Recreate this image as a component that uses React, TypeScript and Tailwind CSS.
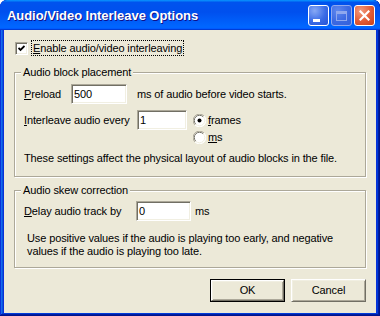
import React from "react";

const edit =
  "h-[20px] bg-white border border-t-[#ACA899] border-l-[#ACA899] border-b-white border-r-white shadow-[inset_1px_1px_0_#716F64,inset_-1px_-1px_0_#F1EFE2] pl-[2px] flex items-center";

function TitleButtons() {
  return (
    <div className="flex gap-[2px]">
      <div className="relative w-[21px] h-[21px] rounded-[3px] border border-white bg-[radial-gradient(circle_at_30%_25%,#88A9F5,#3A6BE6_55%,#2452D6)]">
        <div className="absolute left-[4px] top-[13px] w-[7px] h-[3px] bg-white" />
      </div>
      <div className="relative w-[21px] h-[21px] rounded-[3px] border border-[#8FA8EE] bg-[radial-gradient(circle_at_30%_25%,#5F88EE,#3C69E2_55%,#3460DA)]">
        <div className="absolute left-[4px] top-[5px] w-[11px] h-[10px] border border-t-[3px] border-[#8FA8EE]" />
      </div>
      <div className="relative w-[21px] h-[21px] rounded-[3px] border border-white bg-[radial-gradient(circle_at_30%_25%,#F39B7E,#E25B35_55%,#C8401A)]">
        <svg className="absolute left-[4px] top-[4px]" width="11" height="11" viewBox="0 0 11 11">
          <path d="M1.5 1.5 L9.5 9.5 M9.5 1.5 L1.5 9.5" stroke="white" strokeWidth="2.2" strokeLinecap="square" />
        </svg>
      </div>
    </div>
  );
}

function Radio({ checked }: { checked?: boolean }) {
  return (
    <svg width="13" height="13" viewBox="0 0 13 13" className="shrink-0">
      <circle cx="6.5" cy="6.5" r="6" fill="white" />
      <path d="M11 2 A6 6 0 0 0 2 11" stroke="#ACA899" strokeWidth="1" fill="none" />
      <path d="M10.2 2.8 A5 5 0 0 0 2.8 10.2" stroke="#716F64" strokeWidth="1" fill="none" />
      <path d="M2 11 A6 6 0 0 0 11 2" stroke="#FFFFFF" strokeWidth="1" fill="none" />
      <path d="M2.8 10.2 A5 5 0 0 0 10.2 2.8" stroke="#F1EFE2" strokeWidth="1" fill="none" />
      {checked && <circle cx="6.5" cy="6.5" r="2" fill="black" />}
    </svg>
  );
}

function Button({ label, def }: { label: string; def?: boolean }) {
  return (
    <div
      className={
        "w-[75px] h-[23px] flex items-center justify-center " +
        (def ? "border border-black " : "")
      }
    >
      <div className="w-full h-full flex items-center justify-center border border-t-white border-l-white border-b-[#716F64] border-r-[#716F64] shadow-[inset_1px_1px_0_#F1EFE2,inset_-1px_-1px_0_#ACA899]">
        {label}
      </div>
    </div>
  );
}

function Group({ title, children, className }: { title: string; children: React.ReactNode; className?: string }) {
  return (
    <div
      className={
        "flex flex-col border border-[#ACA899] shadow-[1px_1px_0_#fff,inset_1px_1px_0_#fff] pl-[9px] " +
        (className ?? "")
      }
    >
      <div className="self-start -mt-[7px] -ml-[3px] px-[2px] bg-[#ECE9D8] leading-[13px]">{title}</div>
      {children}
    </div>
  );
}

export default function App() {
  return (
    <div className="w-[380px] h-[316px] bg-white font-['Liberation_Sans',Arial,sans-serif] text-[11px] leading-[13px] text-black">
      <div className="w-full h-full flex flex-col rounded-t-[7px] bg-[#0831D9] shadow-[inset_-1px_-1px_#00138c,inset_1px_1px_#0831d9,inset_-2px_-2px_#001ea0,inset_2px_2px_#166aee,inset_-3px_-3px_#003bda,inset_3px_3px_#0855dd] overflow-hidden">
        <div className="h-[30px] shrink-0 flex items-center pl-[7px] pr-[5px] rounded-t-[7px] bg-[linear-gradient(180deg,#0997ff,#0053ee_8%,#0050ee_40%,#06f_88%,#06f_93%,#005bff_95%,#003dd7_96%,#003dd7)]">
          <div className="flex-1 text-white font-bold text-[13px] leading-[15px] tracking-[-0.05px] [text-shadow:1px_1px_0_#0f1089]">
            Audio/Video Interleave Options
          </div>
          <TitleButtons />
        </div>
        <div className="flex-1 mx-[4px] mb-[3px] bg-[#ECE9D8] flex flex-col px-[10px] tracking-[-0.12px]">
          {/* checkbox row */}
          <div className="mt-[10px] h-[16px] flex items-center">
            <div className="ml-[1px] w-[13px] h-[13px] bg-white border border-t-[#ACA899] border-l-[#ACA899] border-b-white border-r-white shadow-[inset_1px_1px_0_#716F64,inset_-1px_-1px_0_#F1EFE2] flex items-center justify-center">
              <svg width="7" height="7" viewBox="0 0 7 7">
                <path d="M0.5 3 L2.5 5 L6.5 1" stroke="black" strokeWidth="1.8" fill="none" />
              </svg>
            </div>
            <div className="ml-[3px] h-[16px] border border-dotted border-black px-[1px] flex items-center">
              <span>
                <u>E</u>nable audio/video interleaving
              </span>
            </div>
          </div>

          <Group title="Audio block placement" className="mt-[16px] pb-[11px]">
            <div className="mt-[5px] flex items-center">
              <div className="w-[47px]">
                <u>P</u>reload
              </div>
              <div className={edit + " w-[56px]"}>500</div>
              <div className="ml-[10px]">ms of audio before video starts.</div>
            </div>
            <div className="mt-[6px] flex items-start">
              <div className="w-[113px] h-[20px] flex items-center">
                <u>I</u>nterleave audio every
              </div>
              <div className={edit + " w-[50px]"}>1</div>
              <div className="ml-[6px] flex flex-col">
                <div className="h-[20px] flex items-center">
                  <Radio checked />
                  <span className="ml-[2px]">
                    <u>f</u>rames
                  </span>
                </div>
                <div className="mt-[1px] h-[13px] flex items-center">
                  <Radio />
                  <span className="ml-[2px]">
                    <u>m</u>s
                  </span>
                </div>
              </div>
            </div>
            <div className="mt-[8px]">
              These settings affect the physical layout of audio blocks in the file.
            </div>
          </Group>

          <Group title="Audio skew correction" className="mt-[13px] pb-[9px]">
            <div className="mt-[4px] flex items-center">
              <div className="w-[112px]">
                <u>D</u>elay audio track by
              </div>
              <div className={edit + " w-[55px]"}>0</div>
              <div className="ml-[4px]">ms</div>
            </div>
            <div className="mt-[11px] pl-[3px]">
              Use positive values if the audio is playing too early, and negative
              <br />
              values if the audio is playing too late.
            </div>
          </Group>

          <div className="mt-[11px] flex justify-end gap-[6px]">
            <Button label="OK" def />
            <Button label="Cancel" />
          </div>
        </div>
      </div>
    </div>
  );
}
